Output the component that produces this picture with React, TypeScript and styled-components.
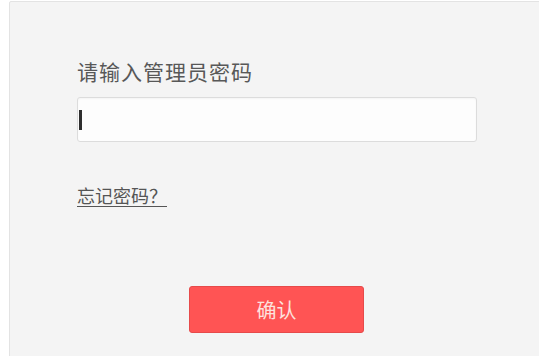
import React from "react";
import styled, { createGlobalStyle } from "styled-components";

const Global = createGlobalStyle`
  html, body {
    margin: 0;
    padding: 0;
    background: #ffffff;
    overflow: hidden;
    font-family: "Noto Sans CJK SC", "Noto Sans", sans-serif;
  }
`;

const Page = styled.div`
  box-sizing: border-box;
  width: 100vw;
  height: 100vh;
  overflow: hidden;
  padding: 1px 0 0 9px;
`;

const Panel = styled.div`
  box-sizing: border-box;
  width: calc(100% + 20px);
  height: calc(100% + 20px);
  background: #f4f4f4;
  border: 1px solid #e3e3e3;
  border-radius: 2px;
  padding: 57px 0 0 67px;
  display: flex;
  flex-direction: column;
  align-items: flex-start;
`;

const Label = styled.div`
  font-size: 21px;
  line-height: 24px;
  color: #585858;
  letter-spacing: 1px;
`;

const Field = styled.div`
  box-sizing: border-box;
  margin-top: 14px;
  width: 400px;
  height: 45px;
  background: #fdfdfd;
  border: 1px solid #dcdcdc;
  border-radius: 3px;
  box-shadow: inset 0 1px 2px rgba(0, 0, 0, 0.04);
  display: flex;
  align-items: center;
  padding-left: 1px;
`;

const Caret = styled.span`
  display: block;
  width: 3px;
  height: 20px;
  margin-top: 1px;
  background: #2e2e2e;
`;

const Forgot = styled.a`
  margin-top: 43px;
  font-size: 18px;
  line-height: 20px;
  color: #555555;
  text-decoration: underline;
  text-underline-offset: 3px;
  cursor: pointer;
`;

const Confirm = styled.button`
  box-sizing: border-box;
  margin: 81px 0 0 112px;
  width: 175px;
  height: 47px;
  background: #ff5454;
  border: 1px solid #e64a4a;
  border-radius: 3px;
  color: #fde2de;
  font-family: "Noto Sans CJK SC", "Noto Sans", sans-serif;
  font-size: 20px;
  padding: 0;
  cursor: pointer;
`;

export default function App() {
  return (
    <>
      <Global />
      <Page>
        <Panel>
          <Label>请输入管理员密码</Label>
          <Field>
            <Caret />
          </Field>
          <Forgot>忘记密码？</Forgot>
          <Confirm>确认</Confirm>
        </Panel>
      </Page>
    </>
  );
}
